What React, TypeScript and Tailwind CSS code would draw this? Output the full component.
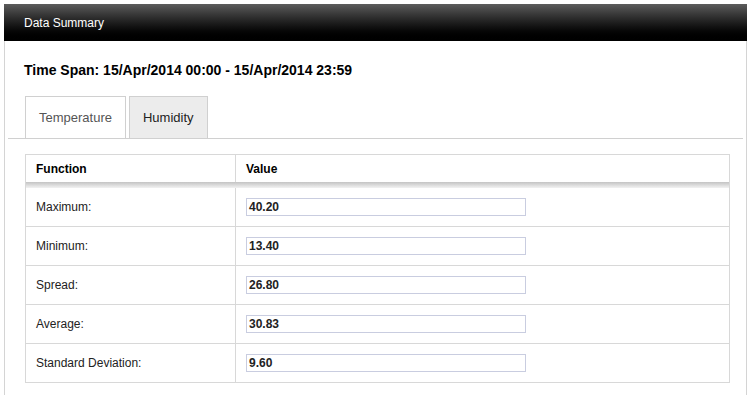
const rows = [
  { label: "Maximum:", value: "40.20" },
  { label: "Minimum:", value: "13.40" },
  { label: "Spread:", value: "26.80" },
  { label: "Average:", value: "30.83" },
  { label: "Standard Deviation:", value: "9.60" },
];

export default function App() {
  return (
    <div className="w-[751px] h-[395px] overflow-hidden bg-white pt-[4px] pl-[4px] font-['Liberation_Sans',Arial,sans-serif]">
      <div className="w-[743px]">
        <div className="h-[37px] bg-gradient-to-b from-[#5c5c5c] to-[#000000] flex items-center pl-[20px] text-[12px] text-white">
          Data Summary
        </div>
        <div className="border-x border-[#d4d4d4] h-[360px] pt-[21px]">
          <div className="pl-[19px] text-[14px] leading-[16px] font-bold text-black">
            Time Span: 15/Apr/2014 00:00 - 15/Apr/2014 23:59
          </div>

          {/* tabs */}
          <div className="mx-[3px] mt-[18px] border-b border-[#d0d0d0] flex gap-[3px] pl-[17px] h-[43px] items-end">
            <div className="h-[42px] border border-b-0 border-[#d0d0d0] bg-white px-[13px] flex items-center text-[13px] text-[#555]">
              Temperature
            </div>
            <div className="h-[42px] border border-b-0 border-[#d0d0d0] bg-[#ececec] px-[13px] flex items-center text-[13px] text-[#222]">
              Humidity
            </div>
          </div>

          {/* summary table */}
          <div className="ml-[20px] mt-[15px] w-[705px] border border-[#d8d8d8] text-[12px]">
            <div className="flex h-[27px] items-center font-bold text-black">
              <div className="w-[210px] h-full flex items-center pl-[10px] border-r border-[#d8d8d8]">Function</div>
              <div className="flex-1 h-full flex items-center pl-[10px]">Value</div>
            </div>
            <div className="h-[6px] bg-gradient-to-b from-[#c4c4c4] to-[#f2f2f2]" />
            {rows.map((r, i) => (
              <div
                key={r.label}
                className={`flex items-center ${i > 0 ? "h-[39px] border-t border-[#d8d8d8]" : "h-[38px]"}`}
              >
                <div className="w-[210px] h-full flex items-center pl-[10px] border-r border-[#d8d8d8] text-[#222]">
                  {r.label}
                </div>
                <div className="flex-1 h-full flex items-center pl-[10px]">
                  <div className="w-[280px] h-[18px] border border-[#c9cde0] flex items-center pl-[2px] font-bold text-[#222]">
                    {r.value}
                  </div>
                </div>
              </div>
            ))}
          </div>
        </div>
      </div>
    </div>
  );
}
